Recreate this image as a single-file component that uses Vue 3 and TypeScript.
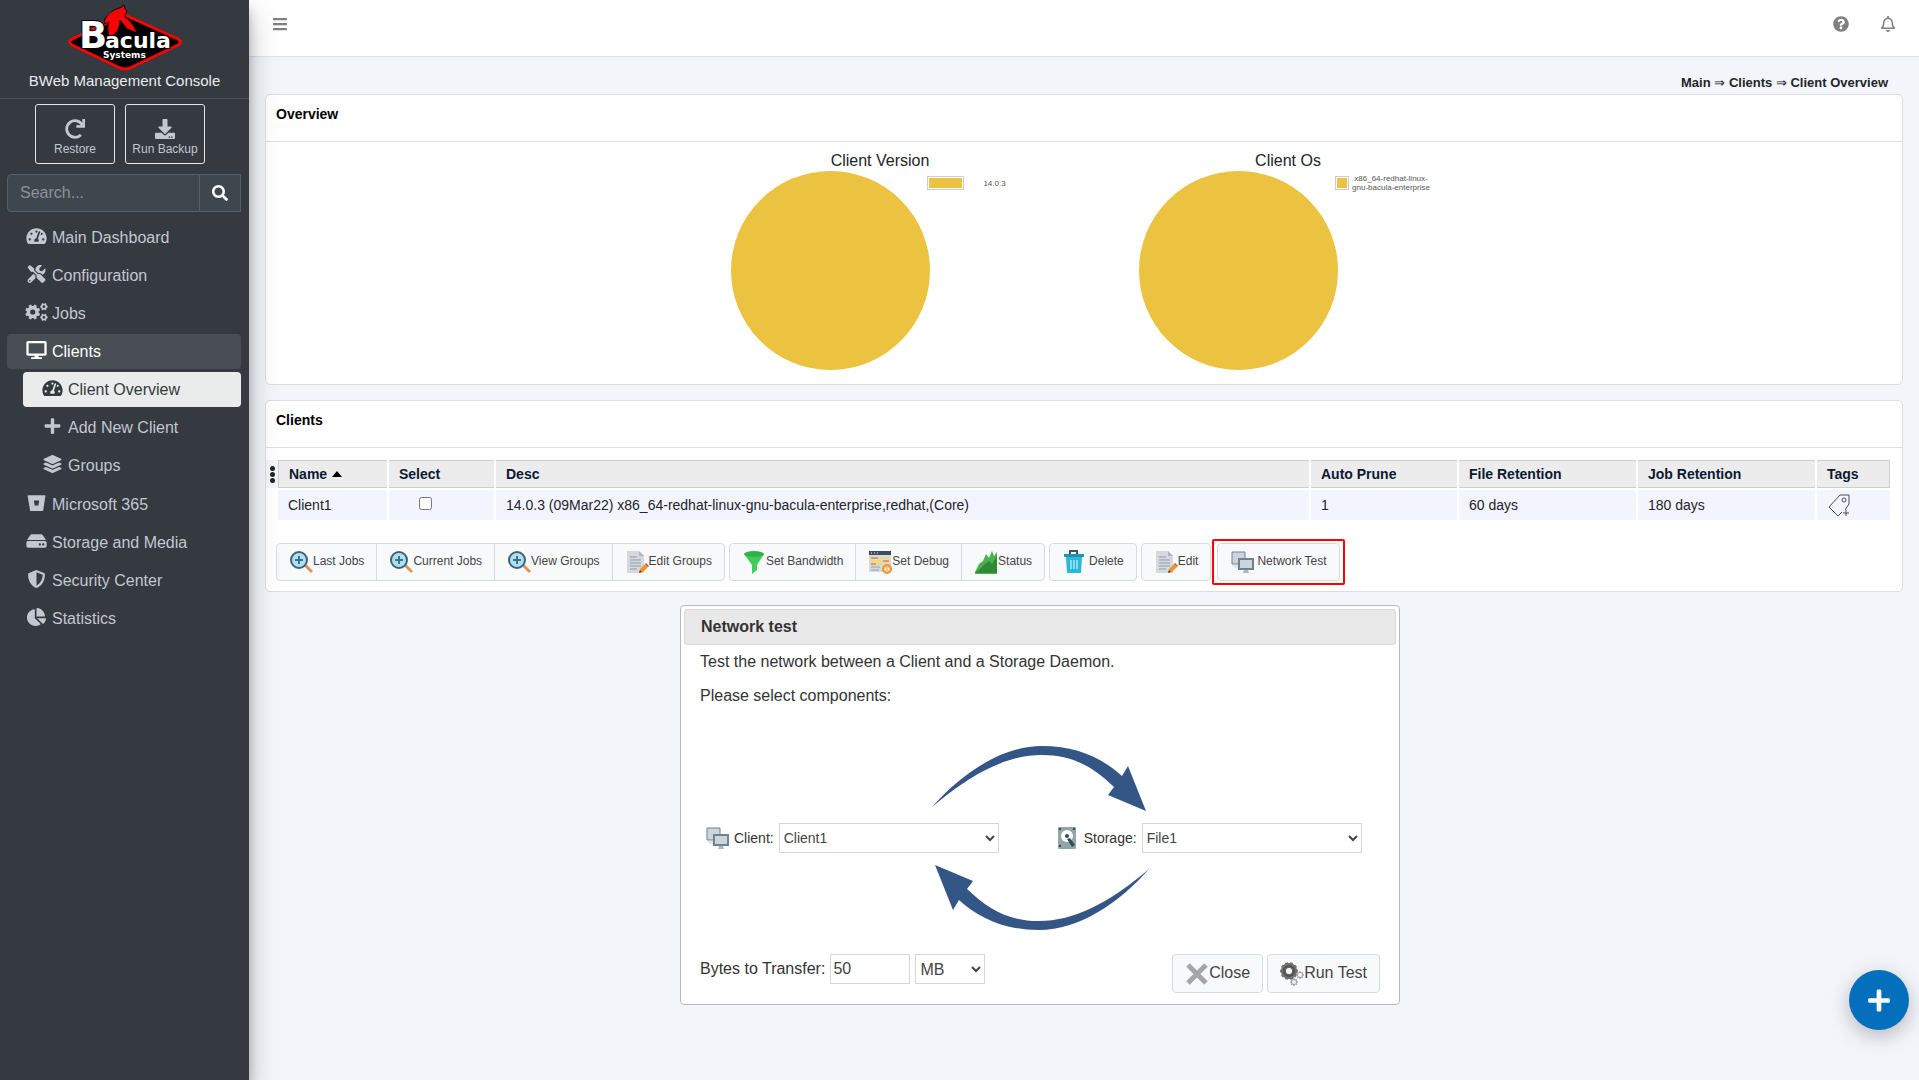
<script setup lang="ts">
import { ref } from 'vue'

interface Glyph {
  box: string
  d: string
}

interface NavItem {
  label: string
  icon: string
  active?: boolean
  children?: { label: string; icon: string; current?: boolean }[]
}

function gear(cx: number, cy: number, outer: number, inner: number, hole: number, teeth: number, turn = 0): string {
  const step = (Math.PI * 2) / teeth
  const at = (r: number, a: number) => `${(cx + r * Math.cos(a)).toFixed(2)} ${(cy + r * Math.sin(a)).toFixed(2)}`
  const points: string[] = []
  for (let i = 0; i < teeth; i++) {
    const a = i * step + turn
    points.push(at(inner, a - step * 0.34), at(outer, a - step * 0.22), at(outer, a + step * 0.22), at(inner, a + step * 0.34))
  }
  const ring = `M${cx - hole} ${cy}a${hole} ${hole} 0 1 0 ${hole * 2} 0a${hole} ${hole} 0 1 0 ${-hole * 2} 0z`
  return `M${points.join('L')}z${ring}`
}

const glyphs: Record<string, Glyph> = {
  redo: {
    box: '0 0 512 512',
    d: 'M500.33 0h-47.41a12 12 0 0 0-12 12.57l4 82.76A247.42 247.42 0 0 0 256 8C119.34 8 7.9 119.53 8 256.19 8.1 393.07 119.1 504 256 504a247.1 247.1 0 0 0 166.18-63.91 12 12 0 0 0 .48-17.43l-34-34a12 12 0 0 0-16.38-.55A176 176 0 1 1 402.1 157.8l-101.53-4.87a12 12 0 0 0-12.57 12v47.41a12 12 0 0 0 12 12h200.33a12 12 0 0 0 12-12V12a12 12 0 0 0-12-12z',
  },
  download: {
    box: '0 0 512 512',
    d: 'M216 0h80c13.3 0 24 10.7 24 24v168h87.7c17.8 0 26.7 21.5 14.1 34.1L269.7 378.3c-7.5 7.5-19.8 7.5-27.3 0L90.1 226.1c-12.6-12.6-3.7-34.1 14.1-34.1H192V24c0-13.3 10.7-24 24-24zm296 376v112c0 13.3-10.7 24-24 24H24c-13.3 0-24-10.7-24-24V376c0-13.3 10.7-24 24-24h146.7l49 49c20.1 20.1 52.5 20.1 72.6 0l49-49H488c13.3 0 24 10.7 24 24zm-124 88c0-11-9-20-20-20s-20 9-20 20 9 20 20 20 20-9 20-20zm64 0c0-11-9-20-20-20s-20 9-20 20 9 20 20 20 20-9 20-20z',
  },
  search: {
    box: '0 0 512 512',
    d: 'M505 442.7L405.3 343c-4.5-4.5-10.6-7-17-7H372c27.6-35.3 44-79.7 44-128C416 93.1 322.9 0 208 0S0 93.1 0 208s93.1 208 208 208c48.3 0 92.7-16.4 128-44v16.3c0 6.4 2.5 12.5 7 17l99.7 99.7c9.4 9.4 24.6 9.4 33.9 0l28.3-28.3c9.4-9.4 9.4-24.6.1-34zM208 336c-70.7 0-128-57.2-128-128 0-70.7 57.2-128 128-128 70.7 0 128 57.2 128 128 0 70.7-57.2 128-128 128z',
  },
  dashboard: {
    box: '0 0 576 512',
    d: 'M288 32C128.94 32 0 160.94 0 320c0 52.8 14.25 102.26 39.06 144.8 5.61 9.62 16.3 15.2 27.44 15.2h443c11.14 0 21.83-5.58 27.44-15.2C561.75 422.26 576 372.8 576 320c0-159.06-128.94-288-288-288zm0 64c14.71 0 26.58 10.13 30.32 23.65-1.11 2.26-2.64 4.23-3.45 6.67l-9.22 27.67c-5.13 3.49-10.97 6.01-17.64 6.01-17.67 0-32-14.33-32-32S270.33 96 288 96zM96 384c-17.67 0-32-14.33-32-32s14.33-32 32-32 32 14.33 32 32-14.33 32-32 32zm48-160c-17.67 0-32-14.33-32-32s14.33-32 32-32 32 14.33 32 32-14.33 32-32 32zm246.77-72.41l-61.33 184C343.13 347.33 352 364.54 352 384c0 11.72-3.38 22.55-8.88 32H232.88c-5.5-9.45-8.88-20.28-8.88-32 0-33.94 26.5-61.43 59.9-63.59l61.34-184.01c4.17-12.56 17.73-19.45 30.36-15.17 12.57 4.19 19.35 17.79 15.17 30.36zm14.66 57.2l15.52-46.55c3.47-1.29 7.13-2.23 11.05-2.23 17.67 0 32 14.33 32 32s-14.33 32-32 32c-11.38-.01-20.89-6.28-26.57-15.22zM480 384c-17.67 0-32-14.33-32-32s14.33-32 32-32 32 14.33 32 32-14.33 32-32 32z',
  },
  tools: {
    box: '0 0 512 512',
    d: 'M501.1 395.7L384 278.6c-23.1-23.1-57.6-27.6-85.4-13.9L192 158.1V96L64 0 0 64l96 128h62.1l106.6 106.6c-13.6 27.8-9.2 62.3 13.9 85.4l117.1 117.1c14.6 14.6 38.2 14.6 52.7 0l52.7-52.7c14.5-14.6 14.5-38.2 0-52.7zM331.7 225c28.3 0 54.9 11 74.9 31l19.4 19.4c15.8-6.9 30.8-16.5 43.8-29.5 37.1-37.1 49.7-89.3 37.9-136.7-2.2-9-13.5-12.1-20.1-5.5l-74.4 74.4-67.9-11.3L334 98.9l74.4-74.4c6.6-6.6 3.4-17.9-5.7-20.2-47.4-11.7-99.6.9-136.6 37.9-28.5 28.5-41.9 66.1-41.2 103.6l82.1 82.1c8.1-1.9 16.5-2.9 24.7-2.9zm-103.9 82l-56.7-56.7L18.7 402.8c-25 25-25 65.5 0 90.5s65.5 25 90.5 0l123.6-123.6c-7.6-19.9-9.9-41.6-5-62.7zM64 472c-13.2 0-24-10.8-24-24 0-13.3 10.7-24 24-24s24 10.7 24 24c0 13.2-10.7 24-24 24z',
  },
  cogs: {
    box: '0 0 640 512',
    d: gear(212, 256, 216, 170, 74, 8, Math.PI / 8) + gear(532, 104, 108, 84, 38, 6) + gear(532, 408, 108, 84, 38, 6),
  },
  desktop: {
    box: '0 0 576 512',
    d: 'M528 0H48C21.5 0 0 21.5 0 48v320c0 26.5 21.5 48 48 48h192l-16 48h-72c-13.3 0-24 10.7-24 24s10.7 24 24 24h272c13.3 0 24-10.7 24-24s-10.7-24-24-24h-72l-16-48h192c26.5 0 48-21.5 48-48V48c0-26.5-21.5-48-48-48zm-16 352H64V64h448v288z',
  },
  plus: {
    box: '0 0 448 512',
    d: 'M416 208H272V64c0-17.67-14.33-32-32-32h-32c-17.67 0-32 14.33-32 32v144H32c-17.67 0-32 14.33-32 32v32c0 17.67 14.33 32 32 32h144v144c0 17.67 14.33 32 32 32h32c17.67 0 32-14.33 32-32V304h144c17.67 0 32-14.33 32-32v-32c0-17.67-14.33-32-32-32z',
  },
  layers: {
    box: '0 0 512 512',
    d: 'M12.41 148.02l232.94 105.67c6.8 3.09 14.49 3.09 21.29 0l232.94-105.67c16.55-7.51 16.55-32.52 0-40.03L266.65 2.31a25.607 25.607 0 0 0-21.29 0L12.41 107.98c-16.55 7.51-16.55 32.53 0 40.04zm487.18 88.28l-58.09-26.33-161.64 73.27c-7.56 3.43-15.59 5.17-23.86 5.17s-16.29-1.74-23.86-5.17L70.51 209.97l-58.1 26.33c-16.55 7.5-16.55 32.5 0 40l232.94 105.59c6.8 3.08 14.49 3.08 21.29 0L499.59 276.3c16.55-7.5 16.55-32.5 0-40zm0 127.8l-57.87-26.23-161.86 73.37c-7.56 3.43-15.59 5.17-23.86 5.17s-16.29-1.74-23.86-5.17L70.29 337.87 12.41 364.1c-16.55 7.5-16.55 32.5 0 40l232.94 105.59c6.8 3.08 14.49 3.08 21.29 0L499.59 404.1c16.55-7.5 16.55-32.5 0-40z',
  },
  bucket: {
    box: '0 0 512 512',
    d: 'M22 32h468c13 0 20 10 18 22l-62 412c-2 9-9 14-17 14H90c-8 0-16-6-17-14L4 54C2 42 9 32 22 32zm286 298l24-148H179l27 148z',
  },
  drive: {
    box: '0 0 576 512',
    d: 'M576 304v96c0 26.51-21.49 48-48 48H48c-26.51 0-48-21.49-48-48v-96c0-26.51 21.49-48 48-48h480c26.51 0 48 21.49 48 48zm-48-80a79.557 79.557 0 0 1 30.777 6.165L462.25 85.374A48.003 48.003 0 0 0 422.311 64H153.689a48 48 0 0 0-39.938 21.374L17.223 230.165A79.557 79.557 0 0 1 48 224h480zm-48 96c-17.673 0-32 14.327-32 32s14.327 32 32 32 32-14.327 32-32-14.327-32-32-32zm-96 0c-17.673 0-32 14.327-32 32s14.327 32 32 32 32-14.327 32-32-14.327-32-32-32z',
  },
  shield: {
    box: '0 0 512 512',
    d: 'M466.5 83.7l-192-80a48.15 48.15 0 0 0-36.9 0l-192 80C27.7 91.1 16 108.6 16 128c0 198.5 114.5 335.7 221.5 380.3 11.8 4.9 25.1 4.9 36.9 0C360.1 472.6 496 349.3 496 128c0-19.4-11.7-36.9-29.5-44.3zM256.1 446.3l-.1-381 175.9 73.3c-3.3 151.4-82.1 261.1-175.8 307.7z',
  },
  pie: {
    box: '0 0 544 512',
    d: 'M527.79 288H290.5l158.03 158.03c6.04 6.04 15.98 6.53 22.19.68 38.7-36.46 65.32-85.61 73.13-140.86 1.34-9.46-6.51-17.85-16.06-17.85zm-15.83-64.8C503.72 103.74 408.26 8.28 288.8.04 279.68-.59 272 7.1 272 16.24V240h223.77c9.14 0 16.82-7.68 16.19-16.8zM224 288V50.71c0-9.55-8.39-17.4-17.84-16.06C86.99 51.49-4.1 155.6.14 280.37 4.5 408.51 114.83 513.59 243.03 511.98c50.4-.63 96.97-16.87 135.26-44.03 7.9-5.6 8.42-17.23 1.57-24.08L224 288z',
  },
  bars: {
    box: '0 0 448 512',
    d: 'M16 132h416c9 0 16-7 16-16V76c0-9-7-16-16-16H16C7 60 0 67 0 76v40c0 9 7 16 16 16zm0 160h416c9 0 16-7 16-16v-40c0-9-7-16-16-16H16c-9 0-16 7-16 16v40c0 9 7 16 16 16zm0 160h416c9 0 16-7 16-16v-40c0-9-7-16-16-16H16c-9 0-16 7-16 16v40c0 9 7 16 16 16z',
  },
  help: {
    box: '0 0 512 512',
    d: 'M504 256c0 136.997-111.043 248-248 248S8 392.997 8 256C8 119.083 119.043 8 256 8s248 111.083 248 248zM262.655 90c-54.497 0-89.255 22.957-116.549 63.758-3.536 5.286-2.353 12.415 2.715 16.258l34.699 26.31c5.205 3.947 12.621 3.008 16.665-2.122 17.864-22.658 30.113-35.797 57.303-35.797 20.429 0 45.698 13.148 45.698 32.958 0 14.976-12.363 22.667-32.534 33.976C247.128 238.528 216 254.941 216 296v4c0 6.627 5.373 12 12 12h56c6.627 0 12-5.373 12-12v-1.333c0-28.462 83.186-29.647 83.186-106.667 0-58.002-60.165-102-116.531-102zM256 338c-25.365 0-46 20.635-46 46 0 25.364 20.635 46 46 46s46-20.636 46-46c0-25.365-20.635-46-46-46z',
  },
  bell: {
    box: '0 0 448 512',
    d: 'M439.39 362.29c-19.32-20.76-55.47-51.99-55.47-154.29 0-77.7-54.48-139.9-127.94-155.16V32c0-17.67-14.32-32-31.98-32s-31.98 14.33-31.98 32v20.84C118.56 68.1 64.08 130.3 64.08 208c0 102.3-36.15 133.53-55.47 154.29-6 6.45-8.66 14.16-8.61 21.71.11 16.4 12.98 32 32.1 32h383.8c19.12 0 32-15.6 32.1-32 .05-7.55-2.61-15.27-8.61-21.71zM67.53 368c21.22-27.97 44.42-74.33 44.53-159.42 0-.2-.06-.38-.06-.58 0-61.86 50.14-112 112-112s112 50.14 112 112c0 .2-.06.38-.06.58.11 85.1 23.31 131.46 44.53 159.42H67.53zM224 512c35.32 0 63.97-28.65 63.97-64H160.03c0 35.35 28.65 64 63.97 64z',
  },
}

const navItems: NavItem[] = [
  { label: 'Main Dashboard', icon: 'dashboard' },
  { label: 'Configuration', icon: 'tools' },
  { label: 'Jobs', icon: 'cogs' },
  {
    label: 'Clients',
    icon: 'desktop',
    active: true,
    children: [
      { label: 'Client Overview', icon: 'dashboard', current: true },
      { label: 'Add New Client', icon: 'plus' },
      { label: 'Groups', icon: 'layers' },
    ],
  },
  { label: 'Microsoft 365', icon: 'bucket' },
  { label: 'Storage and Media', icon: 'drive' },
  { label: 'Security Center', icon: 'shield' },
  { label: 'Statistics', icon: 'pie' },
]

const charts = [
  { title: 'Client Version', legend: '14.0.3', swatch: 'wide' },
  { title: 'Client Os', legend: 'x86_64-redhat-linux-gnu-bacula-enterprise', swatch: 'square' },
]

const toolbar = [
  [
    { label: 'Last Jobs', icon: 'zoom' },
    { label: 'Current Jobs', icon: 'zoom' },
    { label: 'View Groups', icon: 'zoom' },
    { label: 'Edit Groups', icon: 'edit' },
  ],
  [
    { label: 'Set Bandwidth', icon: 'funnel' },
    { label: 'Set Debug', icon: 'debug' },
    { label: 'Status', icon: 'status' },
  ],
  [{ label: 'Delete', icon: 'trash', spaced: true }],
  [{ label: 'Edit', icon: 'edit' }],
] as { label: string; icon: string; spaced?: boolean }[][]

const query = ref('')
const selected = ref(false)
const client = ref('Client1')
const storage = ref('File1')
const amount = ref('50')
const unit = ref('MB')

const smallGear = gear(9, 9, 9, 8, 3, 10)
const tinyGears = gear(20, 13, 4, 3, 2, 8) + gear(14, 20, 4, 3, 2, 8)
</script>

<template>
  <svg class="sprite" aria-hidden="true">
    <symbol id="i-zoom" viewBox="0 0 24 24">
      <path d="M16 15l7 7" stroke="#d9975a" stroke-width="3" />
      <circle cx="10" cy="10" r="8" fill="#a9e1f7" stroke="#45606e" stroke-width="2" />
      <path d="M10 6v8M6 10h8" stroke="#45707f" stroke-width="2" />
    </symbol>
    <symbol id="i-edit" viewBox="0 0 24 24">
      <path d="M2 1h12l5 5v17H2z" fill="#d5d9de" />
      <path d="M14 1v5h5z" fill="#aeb5bc" />
      <path d="M5 7h7M5 10h11M5 13h11M5 16h11M5 19h7" stroke="#8d9aa3" />
      <path d="M14 23l1-4 5-5 3 3-5 5z" fill="#f0952b" />
      <path d="M20 14l1-1 3 3-1 1z" fill="#d9434e" />
      <path d="M14 23l1-3 2 2z" fill="#5f4a3d" />
    </symbol>
    <symbol id="i-funnel" viewBox="0 0 24 24">
      <path d="M2 4l8 11v9l5-4v-5l7-11z" fill="#3fce5e" />
      <ellipse cx="12" cy="4" rx="10" ry="3" fill="#2fb14c" />
    </symbol>
    <symbol id="i-debug" viewBox="0 0 24 24">
      <path d="M1 1h22v21H1z" fill="#d6d9df" />
      <path d="M1 1h22v4H1z" fill="#3c4b5c" />
      <path d="M3 3h1M6 3h1M9 3h1" stroke="#fff" />
      <path d="M3 8h7M3 14h5M15 11h6" stroke="#f09a3e" stroke-width="2" />
      <path d="M12 8h9M3 11h10M10 14h6" stroke="#f4d86b" stroke-width="2" />
      <path d="M3 17h9M3 20h8" stroke="#8fa3b4" />
      <circle cx="19" cy="19" r="4" fill="#f7c48a" stroke="#ef962f" stroke-width="2" />
      <path d="M18 18l-1 1 1 1M20 18l1 1-1 1" fill="none" stroke="#fff" />
    </symbol>
    <symbol id="i-status" viewBox="0 0 24 24">
      <path d="M1 22l4-8 4-3 3-7 3 4 3-7 2 5 3-4v22H1z" fill="#4caf50" />
      <path d="M1 23l6-5 4-4 4-3 3 3 5-8v17z" fill="#2f8a38" />
    </symbol>
    <symbol id="i-trash" viewBox="0 0 24 24">
      <path d="M8 4V1h7v3" fill="none" stroke="#34566b" stroke-width="2" />
      <path d="M2 4h20v3H2z" fill="#2790ad" />
      <path d="M4 7h16l-1 16H5z" fill="#28bad6" />
      <path d="M9 10v9M12 10v9M15 10v9" stroke="#e9fbff" />
    </symbol>
    <symbol id="i-network" viewBox="0 0 24 24">
      <path d="M2 15h9v3H5z" fill="#dde4ea" />
      <path d="M2 2h13v12H2z" fill="#ced4dc" stroke="#70828f" />
      <path d="M9 9h14v10H9z" fill="#ced4dc" stroke="#70828f" stroke-width="2" />
      <path d="M14 20h4l1 3h-6z" fill="#a9b8c3" />
    </symbol>
    <symbol id="i-disk" viewBox="0 0 24 24">
      <rect x="3" y="1" width="18" height="22" rx="1" fill="#94a5a5" />
      <circle cx="12" cy="10" r="6" fill="#fff" />
      <circle cx="12" cy="10" r="2" fill="#34495e" />
      <path d="M12 13l3-1 5 7-3 2z" fill="#34495e" />
      <path d="M4 3h2M18 3h2M4 20h2" stroke="#34495e" stroke-width="2" />
    </symbol>
    <symbol id="i-close" viewBox="0 0 24 24">
      <path d="M3 3l18 18M21 3L3 21" stroke="#a6a6a6" stroke-width="5" />
    </symbol>
    <symbol id="i-run" viewBox="0 0 24 24">
      <path :d="smallGear" fill="#707070" fill-rule="evenodd" />
      <circle cx="9" cy="9" r="5" fill="none" stroke="#505050" stroke-width="2" />
      <path :d="tinyGears" fill="#a2a2a2" fill-rule="evenodd" />
    </symbol>
    <symbol id="i-tag" viewBox="0 0 24 24">
      <path d="M18 17l4-6V2h-9L2 14l9 9 4-4" fill="none" stroke="#4c4c50" stroke-width="1" />
      <circle cx="17" cy="7" r="2" fill="none" stroke="#4c4c50" />
      <path d="M19 17v6M16 20h6" stroke="#4c4c50" stroke-width="1" />
    </symbol>
  </svg>

  <div class="app">
    <aside class="sidebar">
      <a href="#" class="brand">
        <svg class="logo" viewBox="0 0 116 67" role="img" aria-label="Bacula Systems">
          <path d="M58 11L111 35Q116 38 111 41L63 64Q58 66 53 64L5 41Q0 38 5 35z" fill="#000" stroke="#f00" stroke-width="3" stroke-linejoin="round" />
          <path d="M37 17C41 9 47 5 53 4L57 1L58 5L60 7C59 10 58 11 58 13C62 16 67 20 70 29L60 25L53 16C53 24 50 29 46 31L42 36C41 27 40 22 42 18L38 20z" fill="#f00" stroke="#000" />
          <g class="logo-text">
            <text x="12" y="44" font-size="37">B</text>
            <text x="38" y="44" font-size="22">acula</text>
            <text x="36" y="54" font-size="9" class="logo-sub">Systems</text>
          </g>
        </svg>
        <span>BWeb Management Console</span>
      </a>

      <div class="quick">
        <button type="button">
          <svg :viewBox="glyphs.redo.box"><path :d="glyphs.redo.d" /></svg>
          Restore
        </button>
        <button type="button">
          <svg :viewBox="glyphs.download.box"><path :d="glyphs.download.d" /></svg>
          Run Backup
        </button>
      </div>

      <form class="search" role="search" @submit.prevent>
        <input v-model="query" type="search" placeholder="Search..." aria-label="Search" />
        <button type="submit" aria-label="Run search">
          <svg :viewBox="glyphs.search.box"><path :d="glyphs.search.d" /></svg>
        </button>
      </form>

      <nav>
        <ul class="menu">
          <li v-for="item in navItems" :key="item.label">
            <a href="#" :class="{ active: item.active }">
              <svg :viewBox="glyphs[item.icon].box"><path :d="glyphs[item.icon].d" fill-rule="evenodd" /></svg>
              <span>{{ item.label }}</span>
            </a>
            <ul v-if="item.children" class="menu submenu">
              <li v-for="child in item.children" :key="child.label">
                <a href="#" :class="{ current: child.current }">
                  <svg :viewBox="glyphs[child.icon].box"><path :d="glyphs[child.icon].d" /></svg>
                  <span>{{ child.label }}</span>
                </a>
              </li>
            </ul>
          </li>
        </ul>
      </nav>
    </aside>

    <div class="page">
      <header class="topbar">
        <button type="button" aria-label="Toggle menu">
          <svg :viewBox="glyphs.bars.box"><path :d="glyphs.bars.d" /></svg>
        </button>
        <div class="topbar-right">
          <button type="button" aria-label="Help">
            <svg :viewBox="glyphs.help.box"><path :d="glyphs.help.d" /></svg>
          </button>
          <button type="button" aria-label="Notifications">
            <svg :viewBox="glyphs.bell.box"><path :d="glyphs.bell.d" /></svg>
          </button>
        </div>
      </header>

      <main>
        <div class="crumbs">Main <span>⇒</span> Clients <span>⇒</span> Client Overview</div>

        <section class="card">
          <h2>Overview</h2>
          <div class="charts">
            <figure v-for="chart in charts" :key="chart.title" class="chart">
              <figcaption>{{ chart.title }}</figcaption>
              <div class="plot">
                <div class="disc"></div>
                <div class="legend" :class="chart.swatch">
                  <span class="swatch"></span>
                  <span class="legend-label">{{ chart.legend }}</span>
                </div>
              </div>
            </figure>
          </div>
        </section>

        <section class="card">
          <h2>Clients</h2>
          <div class="grid">
            <div class="handle"><i></i><i></i><i></i></div>
            <table>
              <colgroup>
                <col class="c-name" />
                <col class="c-select" />
                <col />
                <col class="c-prune" />
                <col class="c-ret" />
                <col class="c-ret" />
                <col class="c-tags" />
              </colgroup>
              <thead>
                <tr>
                  <th>Name <span class="sort"></span></th>
                  <th>Select</th>
                  <th>Desc</th>
                  <th>Auto Prune</th>
                  <th>File Retention</th>
                  <th>Job Retention</th>
                  <th>Tags</th>
                </tr>
              </thead>
              <tbody>
                <tr>
                  <td>Client1</td>
                  <td class="tick"><input v-model="selected" type="checkbox" aria-label="Select Client1" /></td>
                  <td>14.0.3 (09Mar22) x86_64-redhat-linux-gnu-bacula-enterprise,redhat,(Core)</td>
                  <td>1</td>
                  <td>60 days</td>
                  <td>180 days</td>
                  <td class="tags">
                    <button type="button" aria-label="Add tag"><svg><use href="#i-tag" /></svg></button>
                  </td>
                </tr>
              </tbody>
            </table>
          </div>

          <div class="toolbar">
            <div v-for="(group, index) in toolbar" :key="index" class="group">
              <button v-for="action in group" :key="action.label" type="button" :class="{ spaced: action.spaced }">
                <svg><use :href="'#i-' + action.icon" /></svg>
                <span>{{ action.label }}</span>
              </button>
            </div>
            <div class="marked">
              <div class="group">
                <button type="button" class="spaced">
                  <svg><use href="#i-network" /></svg>
                  <span>Network Test</span>
                </button>
              </div>
            </div>
          </div>
        </section>

        <section class="dialog" role="dialog" aria-labelledby="dialog-title">
          <h3 id="dialog-title">Network test</h3>
          <div class="dialog-body">
            <p>Test the network between a Client and a Storage Daemon.</p>
            <p>Please select components:</p>

            <svg class="arrow" viewBox="0 0 217 66">
              <path d="M0 61C30 27 70 0 110 0C145 0 170 12 190 30L196 20L214 65L176 49L182 41C160 20 140 9 110 9C75 9 40 27 0 61z" />
            </svg>
            <div class="ends">
              <div class="end">
                <svg><use href="#i-network" /></svg>
                <label for="client">Client:</label>
                <select id="client" v-model="client"><option>Client1</option></select>
              </div>
              <div class="end">
                <svg><use href="#i-disk" /></svg>
                <label for="storage">Storage:</label>
                <select id="storage" v-model="storage"><option>File1</option></select>
              </div>
            </div>
            <svg class="arrow" viewBox="-2 0 217 66">
              <path d="M215 5C185 39 145 66 105 66C70 66 45 54 25 36L19 46L1 1L39 17L33 25C55 46 75 57 105 57C140 57 175 39 215 5z" />
            </svg>

            <div class="dialog-foot">
              <div class="transfer">
                <label for="amount">Bytes to Transfer:</label>
                <input id="amount" v-model="amount" type="text" />
                <select v-model="unit" aria-label="Unit"><option>MB</option></select>
              </div>
              <div class="dialog-actions">
                <button type="button"><svg><use href="#i-close" /></svg><span>Close</span></button>
                <button type="button"><svg><use href="#i-run" /></svg><span>Run Test</span></button>
              </div>
            </div>
          </div>
        </section>
      </main>
    </div>

    <button type="button" class="fab" aria-label="Add">
      <svg :viewBox="glyphs.plus.box"><path :d="glyphs.plus.d" /></svg>
    </button>
  </div>
</template>

<style>
body {
  margin: 0;
  background: #f4f5fa;
}
</style>

<style scoped>
* {
  box-sizing: border-box;
}

button,
input,
select {
  font-family: inherit;
}

button {
  padding: 0;
  border: 0;
  background: none;
}

ul,
p,
figure,
h2,
h3 {
  margin: 0;
  padding: 0;
}

a {
  color: inherit;
  text-decoration: none;
}

.sprite {
  position: absolute;
  width: 0;
  height: 0;
}

.app {
  display: flex;
  min-height: 100vh;
  font-family: "Liberation Sans", Arial, sans-serif;
  font-size: 16px;
  color: #212529;
}

.sidebar {
  flex: none;
  z-index: 2;
  width: 249px;
  background: #353940;
  color: #c2c7d0;
  box-shadow: 0 14px 28px rgba(0, 0, 0, 0.25), 0 10px 10px rgba(0, 0, 0, 0.22);
}

.brand {
  display: flex;
  flex-direction: column;
  align-items: center;
  height: 99px;
  padding-top: 4px;
  border-bottom: 1px solid #4b545c;
  font-size: 15px;
  line-height: 20px;
  color: #e9ebed;
}

.logo {
  width: 116px;
  height: 67px;
}

.logo-text {
  font-family: "DejaVu Sans", sans-serif;
  font-weight: bold;
  fill: #fff;
  stroke: #000;
  stroke-width: 2px;
  paint-order: stroke;
}

.logo-sub {
  stroke: none;
}

.quick {
  display: flex;
  gap: 10px;
  padding: 5px 35px 10px;
}

.quick button {
  display: flex;
  flex-direction: column;
  align-items: center;
  flex: none;
  width: 80px;
  height: 60px;
  padding-top: 14px;
  border: 1px solid #e4e6e8;
  border-radius: 3px;
  font-size: 12px;
  line-height: 18px;
  color: #c2c7d0;
}

.quick svg {
  width: 20px;
  height: 20px;
  margin-bottom: 1px;
}

.sidebar svg,
.topbar svg,
.fab svg {
  fill: currentColor;
}

.search {
  display: flex;
  height: 38px;
  margin: 0 8px 8px 7px;
}

.search input {
  flex: 1;
  min-width: 0;
  padding: 0 12px;
  border: 1px solid #56606a;
  border-radius: 4px 0 0 4px;
  outline: 0;
  background: #3f474e;
  font-size: 16px;
  color: #fff;
}

.search input::placeholder {
  color: #8b929a;
}

.search button {
  display: flex;
  align-items: center;
  justify-content: center;
  width: 41px;
  border: 1px solid #56606a;
  border-left: 0;
  background: #3f474e;
  color: #fff;
}

.search svg {
  width: 16px;
  height: 16px;
}

.menu {
  display: flex;
  flex-direction: column;
  gap: 3px;
  padding: 0 8px 0 7px;
  list-style: none;
}

.menu a {
  display: flex;
  align-items: center;
  gap: 2px;
  height: 35px;
  padding-left: 16px;
  border-radius: 4px;
}

.menu a svg {
  width: 27px;
  height: 18px;
  margin-bottom: 3px;
}

.menu .active {
  background: #494e54;
  color: #fff;
}

.menu .current {
  background: #e9ecea;
  color: #343a40;
}

.submenu {
  padding: 3px 0 1px 16px;
}

.page {
  flex: 1;
  min-width: 0;
}

.topbar {
  display: flex;
  align-items: flex-start;
  justify-content: space-between;
  height: 57px;
  padding: 16px 23px;
  border-bottom: 1px solid #dee2e6;
  background: #fff;
}

.topbar button {
  color: #7f7f7f;
}

.topbar svg {
  display: block;
  width: 16px;
  height: 16px;
}

.topbar-right {
  display: flex;
  gap: 31px;
}

main {
  padding: 0 16px;
}

.crumbs {
  padding: 16px 15px 1px;
  font-size: 13px;
  font-weight: bold;
  line-height: 20px;
  text-align: right;
}

.crumbs span {
  font-weight: normal;
}

.card {
  margin-bottom: 15px;
  border: 1px solid #e0dcde;
  border-radius: 5px;
  background: #fff;
}

.card h2 {
  padding: 9px 10px 17px;
  border-bottom: 1px solid #dfdfdf;
  font-size: 14px;
  line-height: 20px;
  color: #000;
}

.charts {
  display: flex;
  justify-content: center;
  padding: 9px 0 14px;
}

.chart {
  width: 408px;
}

.chart figcaption {
  line-height: 20px;
  text-align: center;
}

.plot {
  display: flex;
  align-items: flex-start;
  padding-left: 55px;
}

.disc {
  width: 199px;
  height: 199px;
  border-radius: 50%;
  background: #ecc241;
}

.legend {
  display: flex;
  align-items: center;
  width: 98px;
  height: 18px;
  margin: 3px 0 0 -3px;
}

.swatch {
  flex: none;
  width: 14px;
  height: 14px;
  padding: 1px;
  border: 1px solid #ccc;
  background: #ecc241 content-box;
}

.wide .swatch {
  width: 37px;
}

.legend-label {
  flex: 1;
  font-size: 8px;
  line-height: 9px;
  text-align: center;
  color: #545454;
}

.grid {
  display: flex;
  align-items: flex-start;
  padding: 10px 10px 0 0;
}

.handle {
  display: flex;
  flex: none;
  flex-direction: column;
  align-items: center;
  justify-content: center;
  gap: 1px;
  width: 12px;
  height: 28px;
  margin: 2px -2px 0 0;
  background: #f4f5f6;
}

.handle i {
  width: 5px;
  height: 5px;
  border-radius: 50%;
  background: #212529;
}

table {
  flex: 1;
  width: 100%;
  table-layout: fixed;
  border-spacing: 2px;
  font-size: 14px;
  line-height: 20px;
}

.c-name {
  width: 109px;
}

.c-select {
  width: 105px;
}

.c-prune {
  width: 146px;
}

.c-ret {
  width: 177px;
}

.c-tags {
  width: 73px;
}

th,
td {
  padding: 0 10px;
  text-align: left;
}

th {
  height: 28px;
  border: 1px solid #cfcfcf;
  border-width: 1px 0;
  background: #ececec;
  color: #0b1a33;
}

th:first-child {
  border-left-width: 1px;
}

th:last-child {
  border-right-width: 1px;
}

td {
  height: 30px;
  background: #f4f4ff;
}

.sort {
  display: inline-block;
  margin-left: 1px;
  border: 5px solid transparent;
  border-top: 0;
  border-bottom: 6px solid #000;
  vertical-align: 2px;
}

.tick input {
  display: block;
  width: 13px;
  height: 13px;
  margin: 0 0 3px 20px;
}

.tags button,
.tags svg {
  display: block;
  width: 24px;
  height: 24px;
}

.toolbar {
  display: flex;
  align-items: center;
  gap: 4px;
  margin-top: 17px;
  padding: 0 10px 6px;
}

.group {
  display: flex;
  border: 1px solid #d9dbdd;
  border-radius: 4px;
  background: #f8f9fa;
}

.group button {
  display: flex;
  align-items: center;
  height: 36px;
  padding: 0 12px;
  font-size: 12px;
  color: #444;
}

.group button + button {
  border-left: 1px solid #d9dbdd;
}

.group span,
.dialog-actions span {
  padding-bottom: 2px;
}

.group svg {
  width: 24px;
  height: 24px;
}

.group .spaced {
  gap: 3px;
}

.marked {
  margin-left: -3px;
  padding: 2px 3px;
  border: 2px solid #f00;
  border-radius: 2px;
}

.dialog {
  width: 720px;
  margin: -2px 0 0 415px;
  padding: 3px;
  border: 1px solid #b9b9b9;
  border-radius: 4px;
  background: #fff;
  color: #333;
}

.dialog h3 {
  padding: 7px 16px;
  border: 1px solid #dadada;
  border-radius: 3px;
  background: #e8e8e8;
  font-size: 16px;
  line-height: 20px;
}

.dialog-body {
  padding: 5px 16px 8px;
}

.dialog p {
  margin-bottom: 10px;
  line-height: 24px;
}

.arrow {
  display: block;
  width: 217px;
  height: 66px;
  margin: 0 auto;
  fill: #335687;
}

p + .arrow {
  margin-top: 38px;
}

.ends {
  display: flex;
  gap: 56px;
  margin: 11px 5px;
}

.end {
  display: flex;
  align-items: center;
  gap: 5px;
  font-size: 14px;
}

.end svg {
  width: 24px;
  height: 24px;
}

.dialog select,
.dialog input {
  height: 30px;
  border: 1px solid #d6d6d6;
  background: #fff;
  color: #444;
}

.end select {
  width: 220px;
  font-size: 14px;
}

.dialog-foot {
  display: flex;
  justify-content: space-between;
  margin-top: 24px;
}

.transfer {
  display: flex;
  align-items: center;
  gap: 5px;
  height: 30px;
}

.transfer input {
  width: 80px;
  padding: 0 2px;
  font-size: 16px;
}

.transfer select {
  width: 70px;
  font-size: 16px;
}

.dialog-actions {
  display: flex;
  gap: 4px;
}

.dialog-actions button {
  display: flex;
  align-items: center;
  height: 39px;
  padding: 0 12px;
  border: 1px solid #d9dbdd;
  border-radius: 4px;
  background: #f8f9fa;
  font-size: 16px;
  color: #444;
}

.dialog-actions svg {
  width: 24px;
  height: 24px;
}

.fab {
  display: flex;
  position: fixed;
  right: 10px;
  bottom: 50px;
  align-items: center;
  justify-content: center;
  width: 60px;
  height: 60px;
  border-radius: 50%;
  background: #0470bd;
  color: #fff;
  box-shadow: 0 6px 20px rgba(0, 0, 0, 0.25);
}

.fab svg {
  width: 22px;
  height: 25px;
}
</style>
